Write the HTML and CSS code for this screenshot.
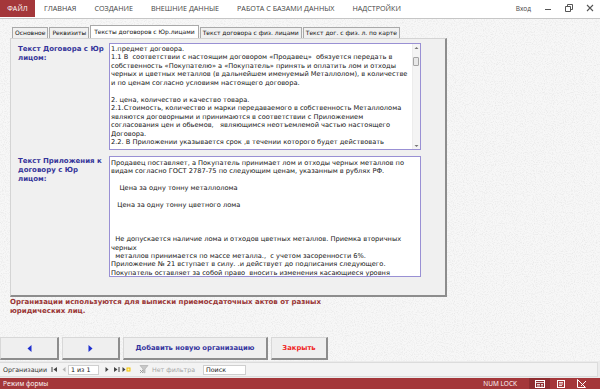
FILE: index.html
```html
<!DOCTYPE html>
<html lang="ru">
<head>
<meta charset="utf-8">
<title>Организации</title>
<link rel="stylesheet" href="styles.css">
</head>
<body>
<div class="app">
  <header class="ribbon">
    <div class="file">ФАЙЛ</div>
    <nav class="menu">
      <span>ГЛАВНАЯ</span>
      <span>СОЗДАНИЕ</span>
      <span>ВНЕШНИЕ ДАННЫЕ</span>
      <span>РАБОТА С БАЗАМИ ДАННЫХ</span>
      <span>НАДСТРОЙКИ</span>
    </nav>
    <div class="winctl">
      <span class="login">Вход</span>
      <svg class="wbtn" width="8" height="8" viewBox="0 0 8 8"><path d="M1 5.5h6" stroke="#555" stroke-width="1"/></svg>
      <svg class="wbtn" width="8" height="8" viewBox="0 0 8 8"><path d="M0.5 2.5h5v5h-5z M2.5 2.5v-2h5v5h-2" fill="none" stroke="#555" stroke-width="1"/></svg>
      <svg class="wbtn" width="8" height="8" viewBox="0 0 8 8"><path d="M1 1l6 6M7 1l-6 6" stroke="#555" stroke-width="1.1"/></svg>
    </div>
  </header>

  <main class="workspace">
    <svg class="texture" width="600" height="342" aria-hidden="true">
      <filter id="noise"><feTurbulence type="fractalNoise" baseFrequency="0.9" numOctaves="2" seed="3"/><feColorMatrix type="matrix" values="0 0 0 0 0.55  0 0 0 0 0.55  0 0 0 0 0.55  0 0 0 -1.6 0.9"/></filter>
      <rect width="600" height="342" fill="#f7f7f7"/>
      <rect width="600" height="342" filter="url(#noise)" opacity="0.4"/>
    </svg>

    <div class="tabs">
      <div class="tab">Основное</div>
      <div class="tab">Реквизиты</div>
      <div class="tab active">Тексты договоров с Юр.лицами</div>
      <div class="tab">Текст договора с физ. лицами</div>
      <div class="tab">Текст дог. с физ. л. по карте</div>
    </div>

    <section class="panel">
      <div class="field">
        <div class="label">Текст Договора с Юр<br>лицом:</div>
        <div class="memo memo-a">
          <div class="memo-text">1.предмет договора.
1.1 В  соответствии с настоящим договором «Продавец»  обязуется передать в
собственность «Покупателю» а «Покупатель» принять и оплатить лом и отходы
черных и цветных металлов (в дальнейшем именуемый Металлолом), в количестве
и по ценам согласно условиям настоящего договора.

2. цена, количество и качество товара.
2.1.Стоимость, количество и марки передаваемого в собственность Металлолома
являются договорными и принимаются в соответствии с Приложением
согласования цен и обьемов,   являющимся неотъемлемой частью настоящего
Договора.
2.2. В Приложении указывается срок ,в течении которого будет действовать</div>
          <div class="vscroll">
            <svg class="arrow" width="7" height="6" viewBox="0 0 7 6"><path d="M1.5 4L3.5 2 5.5 4z" fill="#777"/></svg>
            <div class="track"><div class="thumb"></div></div>
            <svg class="arrow" width="7" height="6" viewBox="0 0 7 6"><path d="M1.5 2L3.5 4 5.5 2z" fill="#777"/></svg>
          </div>
        </div>
      </div>
      <div class="field">
        <div class="label">Текст Приложения к<br>договору с Юр<br>лицом:</div>
        <div class="memo memo-b">
          <div class="memo-text">Продавец поставляет, а Покупатель принимает лом и отходы черных металлов по
видам согласно ГОСТ 2787-75 по следующим ценам, указанным в рублях РФ.

    Цена за одну тонну металлолома

   Цена за одну тонну цветного лома



  Не допускается наличие лома и отходов цветных металлов. Приемка вторичных
черных
  металлов принимается по массе металла.,  с учетом засоренности 6%.
Приложение № 21 вступает в силу. .и действует до подписания следующего.
Покупатель оставляет за собой право  вносить изменения касающиеся уровня</div>
        </div>
      </div>
    </section>

    <p class="note">Организации используются для выписки приемосдаточных актов от разных<br>юридических лиц.</p>

    <div class="buttons">
      <button class="btn btn-prev" type="button"><svg width="5" height="7" viewBox="0 0 5 7"><path d="M4.5 0L0.5 3.5 4.5 7z" fill="#1f2fd0"/></svg></button>
      <button class="btn btn-next" type="button"><svg width="5" height="7" viewBox="0 0 5 7"><path d="M0.5 0L4.5 3.5 0.5 7z" fill="#1f2fd0"/></svg></button>
      <button class="btn btn-add" type="button">Добавить новую организацию</button>
      <button class="btn btn-close" type="button">Закрыть</button>
    </div>
  </main>

  <div class="navbar">
    <div class="navbox">
      <span class="nav-title">Организации</span>
      <svg class="nic n-first" width="7" height="7" viewBox="0 0 7 7"><path d="M1 1v5" stroke="#444" stroke-width="1"/><path d="M6 1L2.5 3.5 6 6z" fill="#444"/></svg>
      <svg class="nic n-prev" width="6" height="7" viewBox="0 0 6 7"><path d="M4.5 1L1.5 3.5 4.5 6z" fill="#b5b5b5"/></svg>
      <span class="recbox">1 из 1</span>
      <svg class="nic n-next" width="6" height="7" viewBox="0 0 6 7"><path d="M1.5 1L4.5 3.5 1.5 6z" fill="#444"/></svg>
      <svg class="nic n-last" width="7" height="7" viewBox="0 0 7 7"><path d="M1 1L4.5 3.5 1 6z" fill="#444"/><path d="M6 1v5" stroke="#444" stroke-width="1"/></svg>
      <svg class="nic n-new" width="9" height="7" viewBox="0 0 9 7"><path d="M0.5 1L3.5 3.5 0.5 6z" fill="#444"/><rect x="4.5" y="1.5" width="4" height="4" fill="#f2c200"/><rect x="5.5" y="2.5" width="2" height="2" fill="#fff3b0"/></svg>
      <span class="filter">
        <svg width="10" height="9" viewBox="0 0 10 9"><path d="M1 0.5h8L6 4v4L4 7V4z" fill="#c8c8c8" stroke="#a8a8a8" stroke-width="0.6"/><path d="M1 5l3 3M4 5l-3 3" stroke="#9a9a9a" stroke-width="0.9"/></svg>
        Нет фильтра
      </span>
      <span class="search">Поиск</span>
    </div>
  </div>

  <footer class="status">
    <span class="mode">Режим формы</span>
    <span class="numlock">NUM LOCK</span>
    <span class="sview active"><svg width="10" height="8" viewBox="0 0 10 8"><rect x="0.5" y="0.5" width="9" height="7" fill="none" stroke="#fff"/><path d="M0.5 2.5h9M2 4.5h3M6 4.5h2M2 6h3M6 6h2" stroke="#fff" stroke-width="0.8"/></svg></span>
    <span class="sview"><svg width="8" height="8" viewBox="0 0 8 8"><rect x="0.5" y="0.5" width="7" height="7" fill="none" stroke="#fff"/><path d="M2 2.5h4M2 4h4M2 5.5h3" stroke="#fff" stroke-width="0.8"/></svg></span>
    <span class="sview"><svg width="10" height="9" viewBox="0 0 10 9"><path d="M0.5 0.5v8h8z" fill="none" stroke="#fff"/><path d="M4 7l5-5" stroke="#fff" stroke-width="1"/></svg></span>
  </footer>
</div>
</body>
</html>
```

FILE: styles.css
```css
* { box-sizing: border-box; margin: 0; padding: 0; }
html, body { width: 600px; height: 389px; overflow: hidden; }
body { font-family: "DejaVu Sans", sans-serif; background: #f0f0f0; color: #111; }

.app { display: flex; flex-direction: column; height: 389px; }

/* Ribbon */
.ribbon {
  flex: none; height: 19px; background: #fff; border-bottom: 1px solid #c6c6c6;
  display: flex; align-items: flex-start; font-family: "Open Sans", sans-serif;
}
.file {
  width: 35px; height: 17px; background: #a4373a; color: #fff; font-size: 7px;
  display: flex; align-items: center; justify-content: center; letter-spacing: 0.1px;
}
.menu { display: flex; gap: 18px; margin-left: 9px; height: 16px; align-items: center; color: #444; font-size: 7.2px; }
.winctl { margin-left: auto; display: flex; align-items: center; height: 16px; gap: 13px; padding-right: 6px; }
.login { font-size: 6.5px; color: #444; margin-right: 0; }
.wbtn { display: block; }

/* Workspace */
.workspace { flex: 1; position: relative; display: flex; flex-direction: column; min-height: 0; }
.texture { position: absolute; left: 0; top: 0; z-index: 0; }
.workspace > :not(.texture) { position: relative; z-index: 1; }

.tabs { display: flex; align-items: flex-end; height: 13px; margin-top: 6px; margin-left: 12px; }
.tab {
  height: 11px; padding: 0 2px; margin-right: 1px; background: #f0f0f0;
  border: 1px solid #a9a9a9; border-bottom: none; font-size: 6px; line-height: 10px; color: #111; white-space: nowrap;
}
.tab.active { height: 13px; background: #fff; line-height: 11px; padding: 0 3px; }

.panel {
  margin-left: 10px; width: 437px; height: 259px; background: #f0f0f0;
  border-top: 1px solid #d4d4d4; border-left: 1px solid #d4d4d4;
  border-right: 2px solid #8d8d8d; border-bottom: 2px solid #8d8d8d;
  padding: 4px 0 0 7px;
}
.field { display: grid; grid-template-columns: 91px 312px; margin-bottom: 6px; }
.label { font-weight: bold; font-size: 7px; line-height: 9px; color: #35359a; padding-top: 2px; }
.field:nth-child(2) .label { padding-top: 1px; }

.memo { display: flex; background: #fff; border: 1px solid #9990d4; overflow: hidden; }
.memo-a { height: 107px; }
.memo-b { height: 121px; }
.memo-text {
  flex: 1; white-space: pre; overflow: hidden; font-size: 6.65px; line-height: 8.45px;
  padding: 1px 0 0 1px; color: #151515;
}
.memo-b .memo-text { padding-top: 2px; }
.vscroll { width: 8px; display: flex; flex-direction: column; background: #f4f4f4; border-left: 1px solid #ececec; }
.arrow { display: block; flex: none; margin-top: 1px; }
.track { flex: 1; padding-top: 6px; }
.thumb { width: 6px; height: 9px; margin-left: 0; background: #e8e8e8; border: 1px solid #a5a5a5; border-radius: 1px; }

.note {
  margin: 1px 0 0 10px; font-weight: bold; font-size: 7px; line-height: 9px; color: #993535;
}

.buttons { margin-top: auto; margin-bottom: 1px; display: flex; gap: 3px; height: 23px; }
.btn {
  height: 23px; background: #efefef; font-family: "DejaVu Sans", sans-serif; font-weight: bold; font-size: 6.8px;
  border-top: 1px solid #d8d8d8; border-left: 1px solid #d8d8d8;
  border-right: 2px solid #8d8d8d; border-bottom: 2px solid #8d8d8d;
  display: flex; align-items: center; justify-content: center;
}
.btn-prev { width: 59px; }
.btn-next { width: 58px; }
.btn-add { width: 145px; color: #34349e; }
.btn-close { width: 57px; color: #f02525; }
.btn svg { display: block; }

/* Navigation bar */
.navbar { flex: none; height: 17px; background: #ebebeb; padding: 1px 2px 1px 0; }
.navbox {
  height: 15px; background: #f3f3f3; border: 1px solid #dcdcdc; border-left: none;
  display: flex; align-items: center; font-size: 6.3px; color: #333;
}
.nav-title { margin-left: 3px; margin-right: 4px; color: #333; }
.nic { display: block; }
.n-first { margin-right: 3px; }
.n-prev { margin-right: 1px; }
.recbox {
  width: 31px; height: 10px; background: #fff; border: 1px solid #cfcfcf; font-size: 6.3px; line-height: 8px;
  padding-left: 2px; margin-right: 5px; color: #111;
}
.n-next { margin-right: 3px; }
.n-last { margin-right: 2px; }
.filter { display: flex; align-items: center; gap: 3px; color: #a5a5a5; margin-left: 8px; margin-right: 8px; font-size: 6.3px; }
.filter svg { display: block; }
.search {
  width: 43px; height: 10px; background: #fff; border: 1px solid #cfcfcf; font-size: 6.3px; line-height: 8px;
  padding-left: 2px; color: #111;
}

/* Status bar */
.status {
  flex: none; height: 11px; background: #a4373a; color: #fff; display: flex; align-items: center;
  font-family: "Open Sans", sans-serif; font-size: 6.5px;
}
.mode { margin-left: 3px; }
.numlock { margin-left: auto; margin-right: 12px; }
.sview { height: 11px; width: 21px; display: flex; align-items: center; justify-content: center; }
.sview.active { background: #8e2d30; }
.sview:last-child { margin-right: 8px; }
.sview svg { display: block; }
```
